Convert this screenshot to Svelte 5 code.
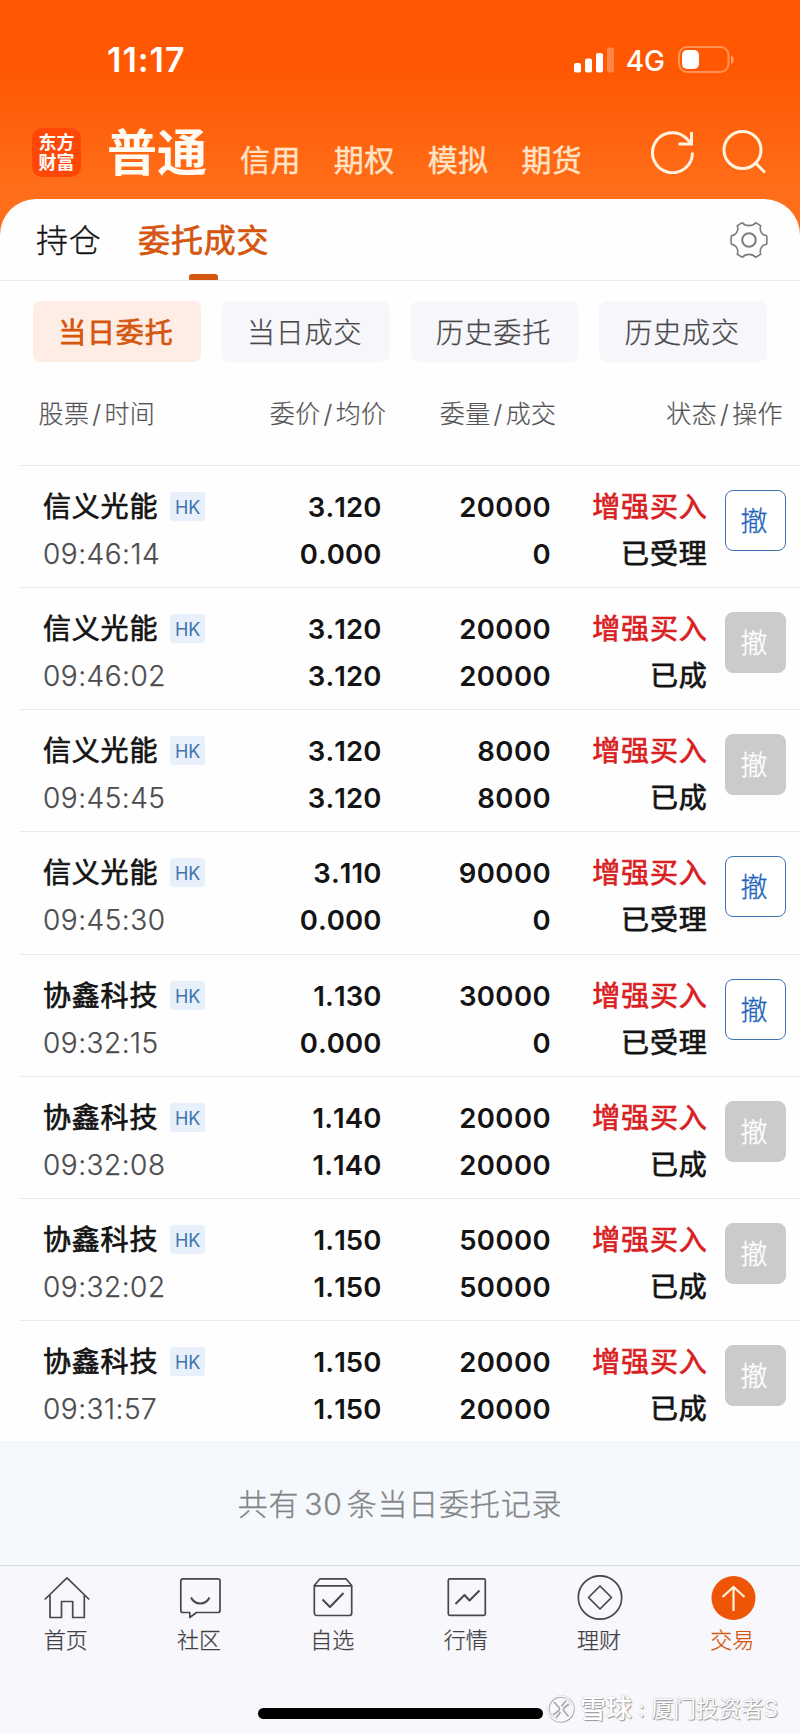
<script>
  const accounts = ['信用', '期权', '模拟', '期货'];
  const filters = ['当日委托', '当日成交', '历史委托', '历史成交'];
  const navItems = [
    { id: 'home', label: '首页' },
    { id: 'community', label: '社区' },
    { id: 'watch', label: '自选' },
    { id: 'market', label: '行情' },
    { id: 'wealth', label: '理财' },
    { id: 'trade', label: '交易' }
  ];
  const total = 30;

  let activeFilter = '当日委托';
  let activeNav = 'trade';

  let orders = [
    { name: '信义光能', time: '09:46:14', price: '3.120', avg: '0.000', qty: 20000, filled: 0 },
    { name: '信义光能', time: '09:46:02', price: '3.120', avg: '3.120', qty: 20000, filled: 20000 },
    { name: '信义光能', time: '09:45:45', price: '3.120', avg: '3.120', qty: 8000, filled: 8000 },
    { name: '信义光能', time: '09:45:30', price: '3.110', avg: '0.000', qty: 90000, filled: 0 },
    { name: '协鑫科技', time: '09:32:15', price: '1.130', avg: '0.000', qty: 30000, filled: 0 },
    { name: '协鑫科技', time: '09:32:08', price: '1.140', avg: '1.140', qty: 20000, filled: 20000 },
    { name: '协鑫科技', time: '09:32:02', price: '1.150', avg: '1.150', qty: 50000, filled: 50000 },
    { name: '协鑫科技', time: '09:31:57', price: '1.150', avg: '1.150', qty: 20000, filled: 20000 }
  ];

  function isDone(order) {
    return order.filled === order.qty;
  }
</script>

<div class="app">
  <header>
    <div class="status-bar">
      <span class="clock">11:17</span>
      <div class="signals">
        <svg class="bars" width="40" height="26" viewBox="0 0 40 26" fill="#fff">
          <rect x="0" y="16" width="7" height="9.5" rx="2" />
          <rect x="11" y="11.5" width="7" height="14" rx="2" />
          <rect x="22" y="6" width="7" height="19.5" rx="2" />
          <rect x="33" y="0.5" width="7" height="25" rx="2" opacity="0.28" />
        </svg>
        <span class="network">4G</span>
        <svg class="battery" width="56" height="28" viewBox="0 0 56 28">
          <rect x="1" y="1" width="49.5" height="25" rx="8" fill="none" stroke="#ff9452" stroke-width="2" />
          <rect x="4" y="4" width="17" height="19" rx="5" fill="#fff" />
          <path d="M53 9.5c3.6 1.4 3.6 7 0 8.4z" fill="#ffa36b" />
        </svg>
      </div>
    </div>

    <div class="account-bar">
      <div class="logo"><span>东方</span><span>财富</span></div>
      <h1>普通</h1>
      <div class="accounts">
        {#each accounts as account}
          <span>{account}</span>
        {/each}
      </div>
      <div class="tools">
        <svg width="44" height="44" viewBox="0 0 44 44" fill="none" stroke="#fff3e0" stroke-width="3">
          <path d="M41.5 22.5A20 20 0 1 1 34.5 7.5L40 13" />
          <path d="M40.5 2V14H27.5" />
        </svg>
        <svg width="44" height="44" viewBox="0 0 44 44" fill="none" stroke="#fff3e0" stroke-width="3">
          <circle cx="20.5" cy="20" r="18.5" />
          <path d="M33 32.5L43 42.5" />
        </svg>
      </div>
    </div>
  </header>

  <main>
    <nav class="tabs">
      <span class="tab">持仓</span>
      <span class="tab active">委托成交</span>
      <svg class="gear" width="38" height="38" viewBox="-19 -19 38 38" fill="none" stroke="#7c7c7c" stroke-width="1.6">
        <path d="M-6.5 -17.2C-3.8 -13.4 3.8 -13.4 6.5 -17.2Q9.5 -16 11.8 -14.2C9.9 -9.9 13 -4.5 17.7 -4.2Q18.2 0 17.7 4.2C13 4.5 9.9 9.9 11.8 14.2Q9.5 16 6.5 17.2C3.8 13.4 -3.8 13.4 -6.5 17.2Q-9.5 16 -11.8 14.2C-9.9 9.9 -13 4.5 -17.7 4.2Q-18.2 0 -17.7 -4.2C-13 -4.5 -9.9 -9.9 -11.8 -14.2Q-9.5 -16 -6.5 -17.2Z" stroke-linejoin="round" />
        <circle r="6.8" stroke-width="2" />
      </svg>
    </nav>

    <div class="filters">
      {#each filters as filter}
        <button
          type="button"
          class:active={filter === activeFilter}
          on:click={() => (activeFilter = filter)}
        >
          {filter}
        </button>
      {/each}
    </div>

    <div class="columns">
      <span>股票<i>/</i>时间</span>
      <span>委价<i>/</i>均价</span>
      <span>委量<i>/</i>成交</span>
      <span>状态<i>/</i>操作</span>
    </div>

    <div class="orders">
      {#each orders as order}
        <div class="order">
          <div class="stock">
            <div class="name">{order.name}<span class="market">HK</span></div>
            <div class="time">{order.time}</div>
          </div>
          <div class="num price">
            <div>{order.price}</div>
            <div>{order.avg}</div>
          </div>
          <div class="num">
            <div>{order.qty}</div>
            <div>{order.filled}</div>
          </div>
          <div class="state">
            <div class="side">增强买入</div>
            <div>{isDone(order) ? '已成' : '已受理'}</div>
          </div>
          <button type="button" class="cancel" disabled={isDone(order)}>撤</button>
        </div>
      {/each}
    </div>
  </main>

  <div class="summary">共有<span>{total}</span>条当日委托记录</div>

  <footer>
    {#each navItems as item}
      <button type="button" class:active={item.id === activeNav} on:click={() => (activeNav = item.id)}>
        <svg width="46" height="46" viewBox="0 0 46 46" fill="none" stroke="#48484c" stroke-width="1.7" stroke-linejoin="round">
          {#if item.id === 'home'}
            <path d="M.8 24.5L23 2.8 45.2 24.5M6 20V42.5H17.5V26.5H28.7V42.5H40.3V20" />
          {:else if item.id === 'community'}
            <path d="M5 3.8H41a2 2 0 0 1 2 2V35.5a2 2 0 0 1-2 2H19.5L12.8 42.5V37.5H5.8a2 2 0 0 1-2-2V5.8a2 2 0 0 1 2-2" />
            <path d="M14 22.5C18 30.5 28.5 30.5 32.5 22.5" stroke-width="2" />
          {:else if item.id === 'watch'}
            <path d="M4.3 10.5L10 3.8H36L41.7 10.5V38a2.5 2.5 0 0 1-2.5 2.5H6.8a2.5 2.5 0 0 1-2.5-2.5ZM4.3 10.8H41.7" />
            <path d="M12.5 24.5L20 32L33.5 18" stroke-width="2" />
          {:else if item.id === 'market'}
            <rect x="4.3" y="3.8" width="37" height="36.5" rx="1.5" />
            <path d="M11.5 29L20.5 20L25.5 25.5L35.5 15.5" stroke-width="2" />
          {:else if item.id === 'wealth'}
            <circle cx="23" cy="22.5" r="21.7" />
            <path d="M23 11L34.5 22.5L23 34L11.5 22.5Z" />
          {:else}
            <circle cx="23.5" cy="23" r="22" fill="#ee5506" stroke="none" />
            <path d="M23.5 36V12.5M12.5 22L23.5 12L34.5 22" stroke="#fff3e0" stroke-width="2.2" stroke-linejoin="miter" />
          {/if}
        </svg>
        <span>{item.label}</span>
      </button>
    {/each}
    <div class="home-indicator"></div>
    <div class="watermark">
      <svg width="28" height="28" viewBox="0 0 28 28" fill="none">
        <circle cx="14" cy="14" r="12.5" stroke="#a9a9ad" stroke-width="2.5" />
        <circle cx="13.5" cy="13.5" r="12.5" stroke="#fff" stroke-width="1.5" />
        <path d="M7 7L12 12.500Q13 14 12 15.500L6 20M14.500 11.500L19 5.500M22 9L17 13Q16 14.500 17 16L21.500 21.500M9 23L13.500 17" stroke="#a9a9ad" stroke-width="1.7" />
      </svg>
      <b>雪球</b><em>:</em><span>厦门投资者S</span>
    </div>
  </footer>
</div>

<style>
:global(body) {
  background: #f8f7fc;
}

.app {
  width: 800px;
  height: 1734px;
  overflow: hidden;
  background: #fefefe;
  color: #141414;
  font-family: Inter, "Noto Sans CJK SC", sans-serif;
}

button {
  border: none;
  padding: 0;
  font-family: inherit;
  cursor: pointer;
}

svg {
  display: block;
  flex: none;
}

header {
  height: 239px;
  background: linear-gradient(#ff5702 70px, #ff6f1b 195px);
}

.status-bar {
  display: flex;
  justify-content: space-between;
  align-items: center;
  height: 119px;
  padding: 0 66px 0 107px;
  color: #fff;
}

.clock {
  font-size: 34px;
  font-weight: 600;
  letter-spacing: 1px;
}

.signals {
  display: flex;
  align-items: center;
}

.network {
  margin: 2px 13px 0 12px;
  font-size: 28px;
  font-weight: 500;
}

.account-bar {
  display: flex;
  height: 80px;
  padding: 0 34px 0 32px;
}

.logo {
  display: flex;
  flex-direction: column;
  justify-content: center;
  width: 49px;
  height: 49px;
  margin-top: 9px;
  border-radius: 10px;
  background: #ff4807;
  color: #fff;
  font-size: 18px;
  font-weight: 700;
  line-height: 20px;
  text-align: center;
}

h1 {
  margin: 4px 0 0 26px;
  color: #fffaf2;
  font-size: 50px;
  font-weight: 700;
  line-height: 60px;
}

.accounts {
  display: flex;
  gap: 33px;
  margin: 21px 0 0 33px;
  color: #ffe4c8;
  font-size: 30px;
  line-height: 40px;
  -webkit-text-stroke: 0.4px;
}

.accounts span {
  letter-spacing: 0.4px;
}

.tools {
  display: flex;
  gap: 27px;
  margin: 11px 0 0 auto;
}

main {
  margin-top: -40px;
  position: relative;
  border-radius: 36px 36px 0 0;
  background: #fefefe;
}

.tabs {
  display: flex;
  align-items: center;
  height: 81px;
  padding: 0 32px 0 36px;
  border-bottom: 1px solid #ececee;
}

.tab {
  position: relative;
  padding-top: 2px;
  font-size: 32px;
  font-weight: 300;
  line-height: 79px;
  letter-spacing: 0.8px;
  -webkit-text-stroke: 0.3px;
}

.tab.active {
  margin-left: 36.5px;
  color: #d4560f;
  font-weight: 400;
  -webkit-text-stroke: 0.7px;
}

.tab.active::after {
  content: '';
  position: absolute;
  left: 51px;
  bottom: 0;
  width: 29px;
  height: 6px;
  border-radius: 3px 3px 1px 1px;
  background: #d4560f;
}

.gear {
  margin-left: auto;
}

.filters {
  display: grid;
  grid-template-columns: repeat(4, 1fr);
  gap: 21px;
  padding: 20px 33px 0;
}

.filters button {
  height: 61px;
  padding: 0 2px 2px 0;
  border-radius: 8px;
  background: #f7f7fb;
  color: #48484a;
  font-size: 28px;
  font-weight: 300;
  letter-spacing: 0.8px;
  -webkit-text-stroke: 0.25px;
}

.filters button.active {
  background: #fdede5;
  color: #d4560f;
  font-weight: 400;
  -webkit-text-stroke: 0.7px;
}

.columns,
.order {
  display: grid;
  grid-template-columns: 200px 148px 170px 1fr;
}

.columns {
  height: 102px;
  padding: 1px 17px 0 38.5px;
  color: #545456;
  font-size: 25px;
  font-weight: 300;
  line-height: 102px;
  letter-spacing: 0.4px;
  -webkit-text-stroke: 0.2px;
}

.columns span + span {
  text-align: right;
}

.columns i {
  padding: 0 3px;
  font-style: normal;
}

.orders {
  margin-left: 20px;
}

.order {
  grid-template-columns: 200px 161.5px 169.5px 133.5px 80px;
  box-sizing: border-box;
  height: 122.16px;
  padding: 18px 0 0 23px;
  border-top: 1px solid #ebebed;
  line-height: 47px;
}

.name {
  display: flex;
  align-items: center;
  height: 47px;
  font-size: 28px;
  letter-spacing: 0.8px;
  -webkit-text-stroke: 0.7px;
}

.market {
  width: 35px;
  height: 29px;
  margin: -2px 0 0 12px;
  border-radius: 3px;
  background: #e8f1fb;
  color: #3f74b0;
  font-size: 18px;
  line-height: 31px;
  letter-spacing: 0;
  text-align: center;
  -webkit-text-stroke: 0;
}

.time {
  color: #4c4c4e;
  font-size: 28px;
  font-weight: 300;
  letter-spacing: 0.5px;
  -webkit-text-stroke: 0.25px;
}

.num {
  padding-right: 23px;
  font-size: 27.5px;
  font-weight: 600;
  font-kerning: none;
  letter-spacing: 0.4px;
  text-align: right;
}

.price {
  letter-spacing: 0.1px;
}

.state {
  font-size: 28px;
  letter-spacing: 0.8px;
  text-align: right;
  -webkit-text-stroke: 0.7px;
}

.side {
  color: #d9201f;
}

.cancel {
  box-sizing: border-box;
  width: 61px;
  height: 61px;
  margin: 6px 0 0 17px;
  padding: 0 2px 2px 0;
  border: 1.5px solid #3f74b4;
  border-radius: 8px;
  background: #fff;
  color: #2064bb;
  font-size: 27px;
  font-weight: 300;
  -webkit-text-stroke: 0.3px;
}

.cancel:disabled {
  border-color: #cbcbcb;
  background: #cbcbcb;
  color: #fff;
}

.summary {
  height: 122px;
  border-top: 1px solid #eceff2;
  background: #f5f9fd;
  color: #848486;
  font-size: 30px;
  font-weight: 300;
  line-height: 122px;
  letter-spacing: 0.8px;
  text-align: center;
  -webkit-text-stroke: 0.3px;
}

.summary span {
  margin: 0 4px 0 5px;
}

footer {
  position: relative;
  display: grid;
  grid-template-columns: repeat(6, 1fr);
  height: 169px;
  border-top: 1px solid #dcdae0;
  background: #f8f7fc;
}

footer button {
  display: flex;
  flex-direction: column;
  align-items: center;
  padding-top: 9px;
  background: none;
  color: #404044;
  font-size: 22px;
  font-weight: 300;
  line-height: 38px;
  -webkit-text-stroke: 0.25px;
}

footer button span {
  padding-right: 2px;
}

footer button.active {
  color: #d4560f;
}

.home-indicator {
  position: absolute;
  left: 258px;
  bottom: 16px;
  width: 285px;
  height: 11px;
  border-radius: 6px;
  background: #000;
}

.watermark {
  position: absolute;
  left: 547px;
  bottom: 9px;
  display: flex;
  align-items: center;
  height: 34px;
  color: #fff;
  font-size: 22.5px;
  text-shadow: 1px 1px 1px #98989c, 0 0 1px #98989c;
}

.watermark b {
  margin-left: 5px;
  font-size: 26px;
  font-weight: 500;
}

.watermark em {
  width: 19px;
  font-style: normal;
  text-align: center;
}

.watermark b,
.watermark em,
.watermark span {
  line-height: 32px;
}
</style>
